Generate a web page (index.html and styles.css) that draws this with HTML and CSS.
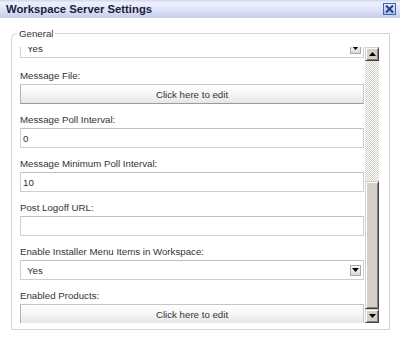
FILE: index.html
```html
<!DOCTYPE html>
<html lang="en">
<head>
    <meta charset="UTF-8">
    <meta name="viewport" content="width=device-width, initial-scale=1.0">
    <title>Workspace Server Settings</title>
    <link rel="stylesheet" href="styles.css">
</head>
<body>
    <div class="dialog">
        <div class="titlebar">
            <span class="title">Workspace Server Settings</span>
            <span class="close-btn">
                <svg width="9" height="8" viewBox="0 0 9 8">
                    <path d="M1 0.5 L8 7.5 M8 0.5 L1 7.5" stroke="#1d3f8c" stroke-width="2"/>
                </svg>
            </span>
        </div>

        <div class="dialog-body">
            <fieldset class="group">
                <legend>General</legend>
                <div class="scroll-pane">
                    <div class="viewport">
                        <div class="field field-cut">
                            <div class="select">
                                <span>Yes</span>
                                <span class="drop-btn"><svg width="7" height="4" viewBox="0 0 7 4"><path d="M0 0 H7 L3.5 4 Z" fill="#000"/></svg></span>
                            </div>
                        </div>

                        <div class="field">
                            <label>Message File:</label>
                            <button class="edit-btn">Click here to edit</button>
                        </div>

                        <div class="field">
                            <label for="poll">Message Poll Interval:</label>
                            <input class="text-input" type="text" id="poll" value="0">
                        </div>

                        <div class="field">
                            <label for="min-poll">Message Minimum Poll Interval:</label>
                            <input class="text-input" type="text" id="min-poll" value="10">
                        </div>

                        <div class="field">
                            <label for="logoff">Post Logoff URL:</label>
                            <input class="text-input" type="text" id="logoff" value="">
                        </div>

                        <div class="field">
                            <label>Enable Installer Menu Items in Workspace:</label>
                            <div class="select">
                                <span>Yes</span>
                                <span class="drop-btn"><svg width="7" height="4" viewBox="0 0 7 4"><path d="M0 0 H7 L3.5 4 Z" fill="#000"/></svg></span>
                            </div>
                        </div>

                        <div class="field">
                            <label>Enabled Products:</label>
                            <button class="edit-btn">Click here to edit</button>
                        </div>
                    </div>

                    <div class="scrollbar">
                        <div class="sb-btn"><svg width="7" height="4" viewBox="0 0 7 4"><path d="M0 4 H7 L3.5 0 Z" fill="#000"/></svg></div>
                        <div class="sb-track"></div>
                        <div class="sb-thumb"></div>
                        <div class="sb-btn"><svg width="7" height="4" viewBox="0 0 7 4"><path d="M0 0 H7 L3.5 4 Z" fill="#000"/></svg></div>
                    </div>
                </div>
            </fieldset>
        </div>
    </div>
</body>
</html>
```

FILE: styles.css
```css
body {
    margin: 0;
    width: 400px;
    height: 341px;
    overflow: hidden;
    background: #fff;
    font-family: "Liberation Sans", Arial, sans-serif;
    font-size: 9.7px;
    color: #333;
}
.titlebar {
    height: 18px;
    display: flex;
    align-items: center;
    justify-content: space-between;
    padding: 0 4px 0 6px;
    background: linear-gradient(#cdd5f0 0, #eef1fb 15%, #dde2f6 55%, #c4cdee 100%);
}
.title {
    font-size: 11.3px;
    font-weight: bold;
    color: #1a2238;
}
.close-btn {
    width: 13px;
    height: 12px;
    box-sizing: border-box;
    display: flex;
    align-items: center;
    justify-content: center;
    border: 1px solid #3d64b0;
    background: linear-gradient(#e4ecfb, #a9c1ea);
}
.dialog-body {
    padding: 9px 10px 0 11px;
}
.group {
    margin: 0;
    padding: 7px 10px 6px 8px;
    border: 1px solid #d3d3d3;
    border-top-left-radius: 6px;
    min-width: 0;
}
.group legend {
    padding: 0 2px;
    margin-left: -3px;
    line-height: 13px;
    color: #333;
}
.scroll-pane {
    display: flex;
    gap: 1px;
    height: 276px;
}
.viewport {
    width: 345px;
    overflow: hidden;
}
.field {
    margin-bottom: 7px;
}
.field-cut {
    margin-top: -9px;
    margin-bottom: 9px;
}
.field label {
    display: block;
    height: 17px;
    line-height: 17px;
}
.text-input, .edit-btn, .select {
    display: block;
    box-sizing: border-box;
    width: 100%;
    height: 20px;
    margin: 0;
    font: inherit;
    color: #333;
}
.text-input {
    padding: 0 2px;
    border: 1px solid #cfcfcf;
    border-top-color: #bfbfbf;
    background: #fff;
    outline: none;
}
.edit-btn {
    padding: 0;
    text-align: center;
    border: 1px solid #c6c6c6;
    border-bottom-color: #9a9a9a;
    border-left-color: #b4b4b4;
    background: linear-gradient(#ffffff, #f6f6f6 50%, #e6e6e6);
}
.select {
    display: flex;
    align-items: center;
    justify-content: space-between;
    padding: 0 2px 0 6px;
    border: 1px solid #cfcfcf;
    border-top-color: #bfbfbf;
    background: #fff;
}
.drop-btn {
    width: 11px;
    height: 11px;
    box-sizing: border-box;
    display: flex;
    align-items: center;
    justify-content: center;
    border: 1px solid #a8a8a8;
    background: linear-gradient(#fafafa, #dadada);
}
.scrollbar {
    width: 14px;
    display: flex;
    flex-direction: column;
}
.sb-btn, .sb-thumb {
    box-sizing: border-box;
    background: #d4d0c8;
    border: 1px solid;
    border-color: #d4d0c8 #404040 #404040 #d4d0c8;
    box-shadow: inset 1px 1px #fff, inset -1px -1px #808080;
}
.sb-btn {
    height: 14px;
    display: flex;
    align-items: center;
    justify-content: center;
}
.sb-track {
    flex: 1;
    background: repeating-conic-gradient(#d4d0c8 0 25%, #fff 0 50%) 0 0 / 2px 2px;
}
.sb-thumb {
    height: 128px;
}
```
